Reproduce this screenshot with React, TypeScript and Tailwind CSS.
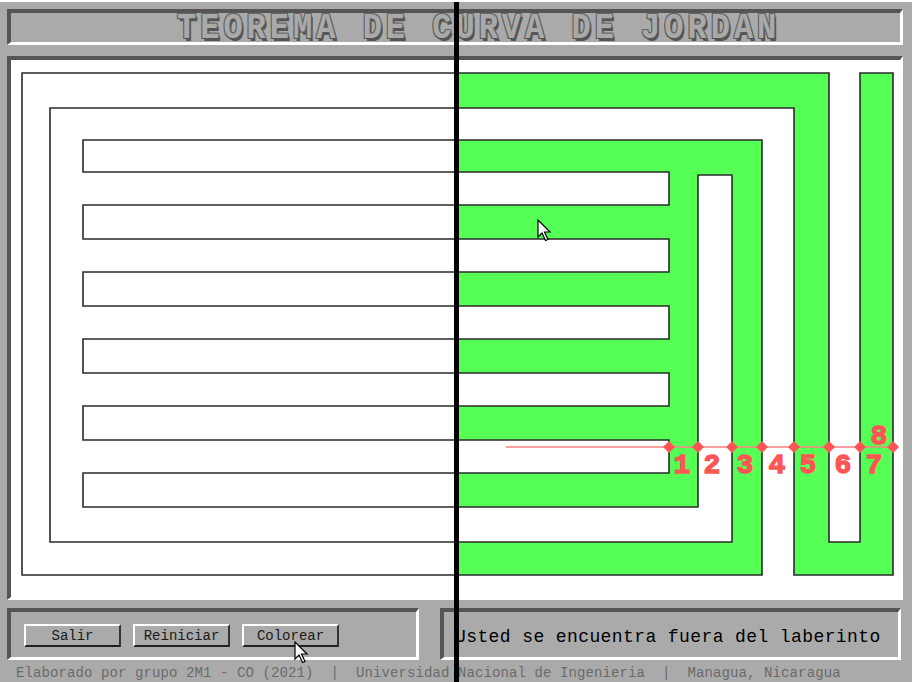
import React from "react"

// outline of the Jordan curve (a comb-shaped maze), in page coordinates
const curve =
  "M22,73 H829 V542 H860 V73 H893 V575 H794 V108 H50 V542 H732 V175 H698 V507 H83 V473 H669 V440 H83 V406 H669 V373 H83 V339 H669 V306 H83 V272 H669 V239 H83 V205 H669 V172 H83 V140 H762 V575 H22 Z"

const crossings = [669, 698, 732, 762, 794, 829, 860, 893]
const labels = [
  { n: "1", x: 682, y: 473 },
  { n: "2", x: 712, y: 473 },
  { n: "3", x: 745, y: 473 },
  { n: "4", x: 777, y: 473 },
  { n: "5", x: 808, y: 473 },
  { n: "6", x: 843, y: 473 },
  { n: "7", x: 874, y: 473 },
  { n: "8", x: 879, y: 444 },
]

function Cursor({ className }: { className: string }) {
  return (
    <svg className={className} width="16" height="23" viewBox="0 0 16 23">
      <path
        d="M1,1 L1,18 L5,14 L8.5,21.5 L11,20.5 L7.5,13 L13,13 Z"
        fill="white"
        stroke="black"
        strokeWidth="1.2"
        strokeLinejoin="miter"
      />
    </svg>
  )
}

const bevel =
  "border-t-4 border-l-4 border-r-[3px] border-b-[3px] border-t-[#555555] border-l-[#555555] border-r-white border-b-white"

export default function App() {
  return (
    <div className="relative h-[682px] w-[912px] overflow-hidden border-t-2 border-t-white bg-[#aaaaaa] font-['Liberation_Mono',monospace]">
      <div className="pl-[7px] pr-[9px] pt-[7px]">
        {/* Title */}
        <div className={`flex h-[36px] items-center bg-[#aaaaaa] pl-[166px] pt-[2px] ${bevel}`}>
          <span className="scale-y-[1.15] text-[32px] font-bold leading-none tracking-[4px] text-[#a9a9a9] [text-shadow:-1px_-1px_0_#666,1px_-1px_0_#666,-1px_1px_0_#555,1px_1px_0_#555,2px_2px_0_#555]">
            TEOREMA DE CURVA DE JORDAN
          </span>
        </div>

        {/* Maze canvas */}
        <div className={`mt-[11px] h-[544px] bg-white ${bevel}`}>
          <svg width="889" height="537" viewBox="11 60 889 537" className="block">
            <defs>
              <clipPath id="right-half">
                <rect x="457" y="60" width="450" height="540" />
              </clipPath>
            </defs>
            <path d={curve} fill="#55ff55" clipPath="url(#right-half)" />
            <path d={curve} fill="none" stroke="#2b2b2b" strokeWidth="1.6" />
            <line x1="506" y1="447" x2="893" y2="447" stroke="#ff8080" strokeWidth="1.5" />
            {crossings.map((x) => (
              <polygon
                key={x}
                points={`${x},441 ${x + 6},447 ${x},453 ${x - 6},447`}
                fill="#ff5555"
              />
            ))}
            {labels.map((l) => (
              <text
                key={l.n}
                x={l.x}
                y={l.y}
                textAnchor="middle"
                fontFamily="'Liberation Mono', monospace"
                fontWeight="bold"
                fontSize="28"
                fill="#ff5555"
                stroke="#ff5555"
                strokeWidth="1.4"
              >
                {l.n}
              </text>
            ))}
          </svg>
        </div>

        {/* Controls + status */}
        <div className="mt-[8px] flex h-[52px]">
          <div className={`flex w-[412px] gap-[12px] bg-[#aaaaaa] pl-[13px] pt-[12px] ${bevel}`}>
            {["Salir", "Reiniciar", "Colorear"].map((b) => (
              <button
                key={b}
                className="h-[23px] w-[97px] border-t-2 border-l-2 border-r-2 border-b-2 border-t-white border-l-white border-r-[#333333] border-b-[#222222] bg-[#aaaaaa] text-[14px] leading-none text-[#1a1a1a]"
              >
                {b}
              </button>
            ))}
          </div>
          <div className={`ml-[21px] flex w-[461px] items-center bg-[#aaaaaa] pl-[11px] pt-[5px] ${bevel}`}>
            <span className="text-[18px] tracking-[0.4px] text-black">Usted se encuentra fuera del laberinto</span>
          </div>
        </div>

        {/* Footer */}
        <div className="mt-[4px] whitespace-pre pl-[9px] text-[14px] leading-[18px] tracking-[0.1px] text-[#6a6a6a]">
          {"Elaborado por grupo 2M1 - CO (2021)  |  Universidad Nacional de Ingenieria  |  Managua, Nicaragua"}
        </div>
      </div>

      {/* overlays */}
      <div className="absolute left-[454px] top-0 h-full w-[5px] bg-black" />
      <Cursor className="absolute left-[537px] top-[217px]" />
      <Cursor className="absolute left-[294px] top-[639px]" />
    </div>
  )
}
